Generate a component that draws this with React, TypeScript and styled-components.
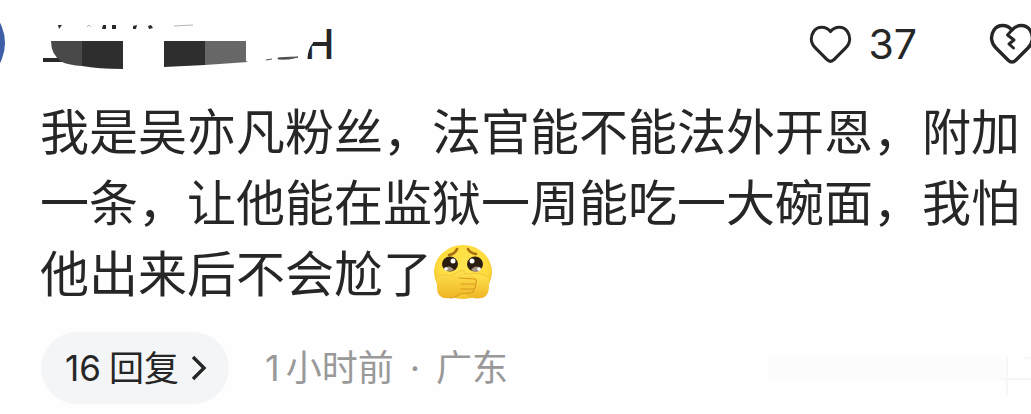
import React from "react";
import styled, { createGlobalStyle } from "styled-components";

const GlobalStyle = createGlobalStyle`
  * { box-sizing: border-box; }
  body {
    margin: 0;
    background: #fefefe;
    color: #262626;
    font-family: Inter, "Noto Sans CJK SC", sans-serif;
    overflow-x: hidden;
  }
`;

const Comment = styled.article`
  width: 100%;
  overflow: hidden;
`;

const Header = styled.header`
  display: flex;
  justify-content: space-between;
  height: 97px;
`;

const Author = styled.svg`
  display: block;
  flex: none;
`;

const Actions = styled.div`
  display: flex;
  align-items: center;
  gap: 72px;
  height: 88px;
  margin-right: -4px;
`;

const ActionButton = styled.button`
  display: flex;
  align-items: center;
  gap: 16px;
  padding: 0;
  border: 0;
  background: none;
  color: inherit;
  font: 400 41px/48px Inter, sans-serif;
  cursor: pointer;

  svg { display: block; flex: none; }
`;

const Body = styled.p`
  margin: 0;
  padding: 0 8px 0 40px;
  font-size: 49px;
  line-height: 71px;
`;

const Emoji = styled.svg`
  display: inline-block;
  vertical-align: -10px;
`;

const Footer = styled.footer`
  display: flex;
  align-items: center;
  padding: 22px 0 10px 41px;
`;

const Replies = styled.button`
  display: flex;
  align-items: center;
  gap: 8px;
  height: 72px;
  padding: 0 22px 0 24px;
  border: 0;
  border-radius: 36px;
  background: #f3f5f6;
  color: #262626;
  font: 400 35px/48px Inter, "Noto Sans CJK SC", sans-serif;
  white-space: nowrap;
  cursor: pointer;

  svg { display: block; margin-left: 4px; }
`;

const Meta = styled.div`
  display: flex;
  gap: 16px;
  margin-left: 36px;
  color: #999;
  font-size: 36px;
  line-height: 48px;
  white-space: nowrap;
`;

const Time = styled.time`
  display: flex;
  gap: 6px;
`;

const Trace = styled.svg`
  display: block;
  flex: none;
  margin-left: auto;
`;

const HEART =
  "M23 8C18 2 9 2 5 8C1 14 2 21 7 26L19 38Q23 42 27 38L39 26C44 21 45 14 41 8C37 2 28 2 23 8Z";

function Heart({ broken = false }: { broken?: boolean }) {
  return (
    <svg width={broken ? 46 : 43} height={broken ? 44 : 41} viewBox="0 0 46 44" fill="none" stroke="#262626" strokeWidth="3.400" strokeLinejoin="round" strokeLinecap="round" aria-hidden="true">
      <path d={HEART} />
      {broken && <path d="M23 8L18.500 13L25 18L20 22L24.500 26" strokeWidth="3" />}
    </svg>
  );
}

function ShyFace() {
  return (
    <Emoji width="62" height="58" viewBox="0 0 62 58" role="img" aria-label="捂嘴">
      <defs>
        <radialGradient id="face" cx="50%" cy="42%" r="56%">
          <stop offset="0" stopColor="#ffe650" />
          <stop offset="0.750" stopColor="#ffdc3e" />
          <stop offset="1" stopColor="#f2c230" />
        </radialGradient>
        <linearGradient id="hand" x1="0" y1="0" x2="0" y2="1">
          <stop offset="0" stopColor="#ffe04c" />
          <stop offset="1" stopColor="#eeb526" />
        </linearGradient>
      </defs>
      <ellipse cx="31" cy="28" rx="29" ry="27" fill="url(#face)" />
      <path d="M17 11Q23 10 25 5" fill="none" stroke="#a76d12" strokeWidth="2.600" strokeLinecap="round" />
      <path d="M36 5Q38 9 44 10" fill="none" stroke="#a76d12" strokeWidth="2.600" strokeLinecap="round" />
      <ellipse cx="18" cy="20" rx="8" ry="7.500" fill="#2b1c10" />
      <ellipse cx="43" cy="20" rx="8" ry="7.500" fill="#2b1c10" />
      <circle cx="21" cy="17" r="2.500" fill="#fff" />
      <circle cx="40" cy="17" r="2.500" fill="#fff" />
      <path d="M12 24Q18 20 22 26Q18 28 13 26Z" fill="#a59486" />
      <path d="M39 26Q43 20 49 24Q48 28 43 28Z" fill="#a59486" />
      <circle cx="14" cy="25" r="1.800" fill="#fff" />
      <circle cx="47" cy="25" r="1.800" fill="#fff" />
      <path d="M56 33C50 31 43 31 38 35L31 48Q38 56 50 54Q57 52 57 42Z" fill="url(#hand)" />
      <path d="M5 33Q10 30 18 33L28 28Q33 26 32 30L31 32L41 31Q45 32 43 35Q46 38 43 40Q45 43 42 45Q42 49 38 49L28 50Q21 55 12 54Q5 52 5 44Z" fill="url(#hand)" />
      <path d="M5 33Q10 29 18 32L28 27Q33 25 33 30Q50 28 56 33" fill="none" stroke="#f3c941" strokeWidth="1.200" />
      <path d="M27 34L43 35Q46 38 43 40L29 40M43 40Q45 43 42 45L29 45M42 45Q42 49 38 49L28 50Q23 54 18 54" fill="none" stroke="#d99c20" strokeWidth="1.100" strokeLinecap="round" />
    </Emoji>
  );
}

function HiddenAuthor() {
  return (
    <Author width="345" height="88" viewBox="0 0 345 88" role="img" aria-label="H">
      <circle cx="-38" cy="43" r="43" fill="#3e5fa8" />
      <path d="M43 58H63V62H43Z" fill="#292929" />
      <path d="M51 41H82V66Q69 65 62 62Q51 55 51 41Z" fill="#494949" />
      <path d="M82 41H123V69Q98 69 82 66Z" fill="#2e2e2e" />
      <path d="M164 41H205V65L164 67Z" fill="#2e2e2e" />
      <path d="M205 41H246V61L248 62L205 65Z" fill="#676767" />
      <path d="M58 25H62L59 29Z M103 25H106V29H102Z M112 25H116V29H112Z M133 26L137 25L136 29H133Z M148 26L151 25L153 28L149 29Z" fill="#292929" />
      <path d="M87 27L89 25L91 27M174 26L193 25" fill="none" stroke="#b5b5b5" />
      <path d="M266 60L272 59M278 59Q290 60 298 57Q290 57 278 58Z" fill="#3a3a3a" stroke="#555" />
      <text x="304" y="59" fontFamily="Inter, sans-serif" fontSize="41" fontWeight="500" fill="#262626">H</text>
      <path d="M301 24H313V43Q308 48 307 61H301Z" fill="#fefefe" />
    </Author>
  );
}

export default function App() {
  return (
    <>
      <GlobalStyle />
      <Comment>
        <Header>
          <HiddenAuthor />
          <Actions>
            <ActionButton type="button">
              <Heart />
              37
            </ActionButton>
            <ActionButton type="button" aria-label="不喜欢">
              <Heart broken />
            </ActionButton>
          </Actions>
        </Header>
        <Body>
          我是吴亦凡粉丝，法官能不能法外开恩，附加一条，让他能在监狱一周能吃一大碗面，我怕他出来后不会尬了
          <ShyFace />
        </Body>
        <Footer>
          <Replies type="button">
            <span>16</span>
            <span>回复</span>
            <svg width="16" height="26" viewBox="0 0 16 26" fill="none" stroke="#262626" strokeWidth="3.400" aria-hidden="true">
              <path d="M2 2L13 13L2 24" />
            </svg>
          </Replies>
          <Meta>
            <Time>
              <span>1</span>
              <span>小时前</span>
            </Time>
            <span>·</span>
            <span>广东</span>
          </Meta>
          <Trace width="263" height="60" viewBox="0 0 263 60" fill="none" aria-hidden="true">
            <path d="M0 20H239V41H0Z" fill="#fcfcfc" />
            <path d="M232 41H263M239 18V58M257 20H263" stroke="#f6f6f6" strokeWidth="2" />
          </Trace>
        </Footer>
      </Comment>
    </>
  );
}
